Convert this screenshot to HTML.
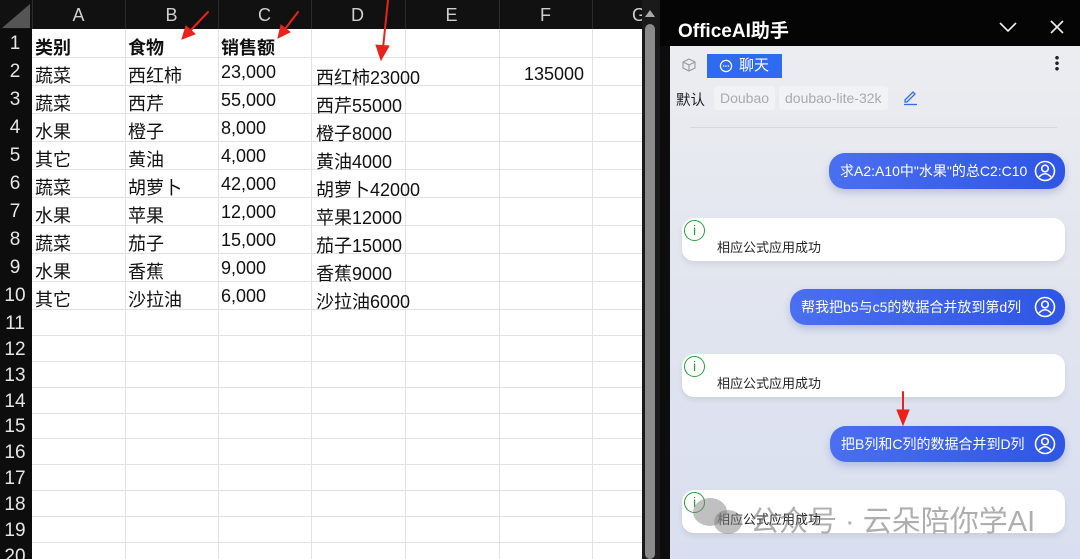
<!DOCTYPE html>
<html><head><meta charset="utf-8"><style>
*{margin:0;padding:0;box-sizing:border-box}
html,body{width:1080px;height:559px;overflow:hidden}
body{background:#0d0d0d;position:relative;font-family:"Liberation Sans","Noto Sans CJK SC",sans-serif}
.a{position:absolute}
.ch{color:#cfcfcf;font-size:18px;top:5px;width:93px;text-align:center}
.rn{color:#e6e6e6;font-size:19px;left:0;width:30px;text-align:center}
.c{font-size:18px;color:#111;white-space:nowrap}
.b{font-weight:bold}
.bub{background:linear-gradient(90deg,#4a6ff0,#2f55e6);color:#fff;border-radius:16px;height:36px;font-size:14px;line-height:36px;padding-left:11px;box-shadow:0 4px 8px rgba(60,80,180,.25);white-space:nowrap}
.card{background:#fff;border-radius:12px;left:682px;width:383px;height:43px;box-shadow:0 3px 6px rgba(0,0,0,.08)}
.card span{position:absolute;left:35px;top:19px;font-size:13px;color:#222}
.card i{position:absolute;left:2px;top:2px;width:21px;height:21px;border:1.7px solid #2a9a3a;border-radius:50%;color:#2a9a3a;font-style:normal;font-size:14px;text-align:center;line-height:18px}
.ic{position:absolute;right:9px;top:7px}
</style></head><body>
<div class="a" style="left:32px;top:29px;width:610px;height:530px;background:#fff"></div>
<svg class="a" style="left:0;top:0" width="660" height="559">
<g stroke="#e2e2e2" stroke-width="1">
<line x1="125.5" y1="29" x2="125.5" y2="559"/><line x1="218.5" y1="29" x2="218.5" y2="559"/><line x1="311.5" y1="29" x2="311.5" y2="559"/><line x1="405.5" y1="29" x2="405.5" y2="559"/><line x1="499.5" y1="29" x2="499.5" y2="559"/><line x1="592.5" y1="29" x2="592.5" y2="559"/>
<line x1="32" y1="57.5" x2="642" y2="57.5"/><line x1="32" y1="85.5" x2="642" y2="85.5"/><line x1="32" y1="113.5" x2="642" y2="113.5"/><line x1="32" y1="141.5" x2="642" y2="141.5"/><line x1="32" y1="169.5" x2="642" y2="169.5"/><line x1="32" y1="197.5" x2="642" y2="197.5"/><line x1="32" y1="225.5" x2="642" y2="225.5"/><line x1="32" y1="253.5" x2="642" y2="253.5"/><line x1="32" y1="281.5" x2="642" y2="281.5"/><line x1="32" y1="309.5" x2="642" y2="309.5"/>
<line x1="32" y1="335.5" x2="642" y2="335.5"/><line x1="32" y1="361.5" x2="642" y2="361.5"/><line x1="32" y1="387.5" x2="642" y2="387.5"/><line x1="32" y1="413.5" x2="642" y2="413.5"/><line x1="32" y1="438.5" x2="642" y2="438.5"/><line x1="32" y1="464.5" x2="642" y2="464.5"/><line x1="32" y1="490.5" x2="642" y2="490.5"/><line x1="32" y1="516.5" x2="642" y2="516.5"/><line x1="32" y1="542.5" x2="642" y2="542.5"/>
</g>
<rect x="0" y="0" width="642" height="29" fill="#111"/>
<g stroke="#2c2c2c"><line x1="32.5" y1="0" x2="32.5" y2="29"/><line x1="125.5" y1="0" x2="125.5" y2="29"/><line x1="218.5" y1="0" x2="218.5" y2="29"/><line x1="311.5" y1="0" x2="311.5" y2="29"/><line x1="405.5" y1="0" x2="405.5" y2="29"/><line x1="499.5" y1="0" x2="499.5" y2="29"/><line x1="592.5" y1="0" x2="592.5" y2="29"/></g>
<path d="M2 28 L30 28 L30 4Z" fill="#555"/>
<rect x="0" y="29" width="32" height="530" fill="#0d0d0d"/>
<rect x="642" y="0" width="18" height="559" fill="#1a1a1a"/>
<rect x="645" y="24" width="10" height="535" rx="5" fill="#8a8a8a"/>
<path d="M645 17 L650 10 L655 17Z" fill="#aaa"/>
</svg>
<div class="a ch" style="left:32px">A</div><div class="a ch" style="left:125px">B</div><div class="a ch" style="left:218px">C</div><div class="a ch" style="left:311px">D</div><div class="a ch" style="left:405px">E</div><div class="a ch" style="left:499px">F</div><div class="a ch" style="left:592px;width:50px;text-align:left;padding-left:40px;overflow:hidden">G</div>
<div class="a rn" style="top:33px">1</div><div class="a rn" style="top:61px">2</div><div class="a rn" style="top:89px">3</div><div class="a rn" style="top:117px">4</div><div class="a rn" style="top:145px">5</div><div class="a rn" style="top:173px">6</div><div class="a rn" style="top:201px">7</div><div class="a rn" style="top:229px">8</div><div class="a rn" style="top:257px">9</div><div class="a rn" style="top:285px">10</div>
<div class="a rn" style="top:313px">11</div><div class="a rn" style="top:339px">12</div><div class="a rn" style="top:365px">13</div><div class="a rn" style="top:391px">14</div><div class="a rn" style="top:416px">15</div><div class="a rn" style="top:442px">16</div><div class="a rn" style="top:468px">17</div><div class="a rn" style="top:494px">18</div><div class="a rn" style="top:520px">19</div><div class="a rn" style="top:546px">20</div>
<div class="a c b" style="left:35px;top:34px">类别</div><div class="a c b" style="left:128px;top:34px">食物</div><div class="a c b" style="left:221px;top:34px">销售额</div>
<div class="a c" style="left:35px;top:62px">蔬菜</div><div class="a c" style="left:128px;top:62px">西红柿</div><div class="a c" style="left:221px;top:62px">23,000</div><div class="a c" style="left:316px;top:64px">西红柿23000</div><div class="a c" style="left:524px;top:64px">135000</div>
<div class="a c" style="left:35px;top:90px">蔬菜</div><div class="a c" style="left:128px;top:90px">西芹</div><div class="a c" style="left:221px;top:90px">55,000</div><div class="a c" style="left:316px;top:92px">西芹55000</div>
<div class="a c" style="left:35px;top:118px">水果</div><div class="a c" style="left:128px;top:118px">橙子</div><div class="a c" style="left:221px;top:118px">8,000</div><div class="a c" style="left:316px;top:120px">橙子8000</div>
<div class="a c" style="left:35px;top:146px">其它</div><div class="a c" style="left:128px;top:146px">黄油</div><div class="a c" style="left:221px;top:146px">4,000</div><div class="a c" style="left:316px;top:148px">黄油4000</div>
<div class="a c" style="left:35px;top:174px">蔬菜</div><div class="a c" style="left:128px;top:174px">胡萝卜</div><div class="a c" style="left:221px;top:174px">42,000</div><div class="a c" style="left:316px;top:176px">胡萝卜42000</div>
<div class="a c" style="left:35px;top:202px">水果</div><div class="a c" style="left:128px;top:202px">苹果</div><div class="a c" style="left:221px;top:202px">12,000</div><div class="a c" style="left:316px;top:204px">苹果12000</div>
<div class="a c" style="left:35px;top:230px">蔬菜</div><div class="a c" style="left:128px;top:230px">茄子</div><div class="a c" style="left:221px;top:230px">15,000</div><div class="a c" style="left:316px;top:232px">茄子15000</div>
<div class="a c" style="left:35px;top:258px">水果</div><div class="a c" style="left:128px;top:258px">香蕉</div><div class="a c" style="left:221px;top:258px">9,000</div><div class="a c" style="left:316px;top:260px">香蕉9000</div>
<div class="a c" style="left:35px;top:286px">其它</div><div class="a c" style="left:128px;top:286px">沙拉油</div><div class="a c" style="left:221px;top:286px">6,000</div><div class="a c" style="left:316px;top:288px">沙拉油6000</div>
<!-- panel -->
<div class="a" style="left:660px;top:0;width:420px;height:46px;background:#050505"></div>
<div class="a" style="left:678px;top:16px;color:#fff;font-size:19px;font-weight:bold">OfficeAI助手</div>
<svg class="a" style="left:990px;top:14px" width="80" height="26"><path d="M10 9 L18 17 L26 9" stroke="#eee" stroke-width="1.6" fill="none"/><path d="M61 7 L73 19 M73 7 L61 19" stroke="#eee" stroke-width="1.6"/></svg>
<div class="a" style="left:670px;top:46px;width:410px;height:513px;background:linear-gradient(180deg,#ecedf1 0%,#e3e6ef 40%,#d9dff0 100%)"></div>
<svg class="a" style="left:680px;top:57px" width="20" height="18"><path d="M3 5 L9 2 L15 5 L15 11 L9 14 L3 11Z M3 5 L9 8 L15 5 M9 8 L9 14" stroke="#999" stroke-width="1.1" fill="none"/></svg>
<div class="a" style="left:707px;top:54px;width:75px;height:24px;background:#2f6bf0;color:#fff;font-size:15px;line-height:24px;padding-left:32px">聊天</div>
<svg class="a" style="left:719px;top:59px" width="14" height="14"><circle cx="7" cy="7" r="5.6" stroke="#fff" stroke-width="1.2" fill="none"/><circle cx="4.6" cy="7" r=".8" fill="#fff"/><circle cx="7" cy="7" r=".8" fill="#fff"/><circle cx="9.4" cy="7" r=".8" fill="#fff"/></svg>
<div class="a" style="left:1055px;top:55px;width:4px;height:16px;background:radial-gradient(circle,#222 1.6px,transparent 2px) 0 0/4px 5.5px"></div>
<div class="a" style="left:676px;top:89px;font-size:14.5px;color:#222">默认</div>
<div class="a" style="left:714px;top:86px;height:24px;padding:0 6px;background:#f1f2f5;color:#aaa;font-size:14px;line-height:24px;border-radius:3px">Doubao</div>
<div class="a" style="left:779px;top:86px;height:24px;padding:0 6px;background:#f1f2f5;color:#aaa;font-size:14px;line-height:24px;border-radius:3px">doubao-lite-32k</div>
<svg class="a" style="left:901px;top:88px" width="18" height="18"><path d="M4 12 L12 4 L14 6 L6 14 L4 14Z" stroke="#2f6bf0" stroke-width="1.3" fill="none"/><line x1="3" y1="16.5" x2="16" y2="16.5" stroke="#2f6bf0" stroke-width="1.3"/></svg>
<div class="a" style="left:690px;top:127px;width:367px;height:1px;background:#d6d8de"></div>
<svg width="0" height="0" style="position:absolute"><defs><g id="u"><circle cx="11" cy="11" r="9.5" stroke="#fff" stroke-width="1.6" fill="none"/><circle cx="11" cy="8.5" r="3.3" stroke="#fff" stroke-width="1.6" fill="none"/><path d="M5 17 Q11 10.5 17 17" stroke="#fff" stroke-width="1.6" fill="none"/></g></defs></svg>
<div class="a bub" style="left:829px;top:153px;width:236px">求A2:A10中"水果"的总C2:C10<svg class="ic" width="22" height="22"><use href="#u"/></svg></div>
<div class="a card" style="top:218px"><i>i</i><span>相应公式应用成功</span></div>
<div class="a bub" style="left:790px;top:289px;width:275px">帮我把b5与c5的数据合并放到第d列<svg class="ic" width="22" height="22"><use href="#u"/></svg></div>
<div class="a card" style="top:354px"><i>i</i><span>相应公式应用成功</span></div>
<div class="a bub" style="left:830px;top:426px;width:235px">把B列和C列的数据合并到D列<svg class="ic" width="22" height="22"><use href="#u"/></svg></div>
<div class="a card" style="top:490px"><i>i</i><span>相应公式应用成功</span></div>
<svg class="a" style="left:690px;top:494px" width="56" height="44"><ellipse cx="20" cy="18" rx="17" ry="14" fill="rgba(130,130,130,.5)"/><ellipse cx="38" cy="28" rx="14" ry="12" fill="rgba(130,130,130,.5)"/></svg>
<div class="a" style="left:750px;top:498px;font-size:29px;color:rgba(120,120,120,.6);white-space:nowrap">公众号 · 云朵陪你学AI</div>
<svg class="a" style="left:0;top:0;pointer-events:none" width="1080" height="559">
<g fill="#e8231b" stroke="#e8231b" stroke-linecap="round">
<line x1="208" y1="12" x2="190" y2="31" stroke-width="2"/><path d="M182 39 L186 26 L195 34Z"/>
<line x1="298" y1="12" x2="285" y2="29" stroke-width="2"/><path d="M278 38 L281 25 L290 32Z"/>
<line x1="388" y1="0" x2="383" y2="48" stroke-width="2"/><path d="M381 60 L376 45 L389 46Z"/>
<line x1="903" y1="392" x2="903" y2="412" stroke-width="2"/><path d="M903 425 L897 410 L909 410Z"/>
</g></svg>
</body></html>
